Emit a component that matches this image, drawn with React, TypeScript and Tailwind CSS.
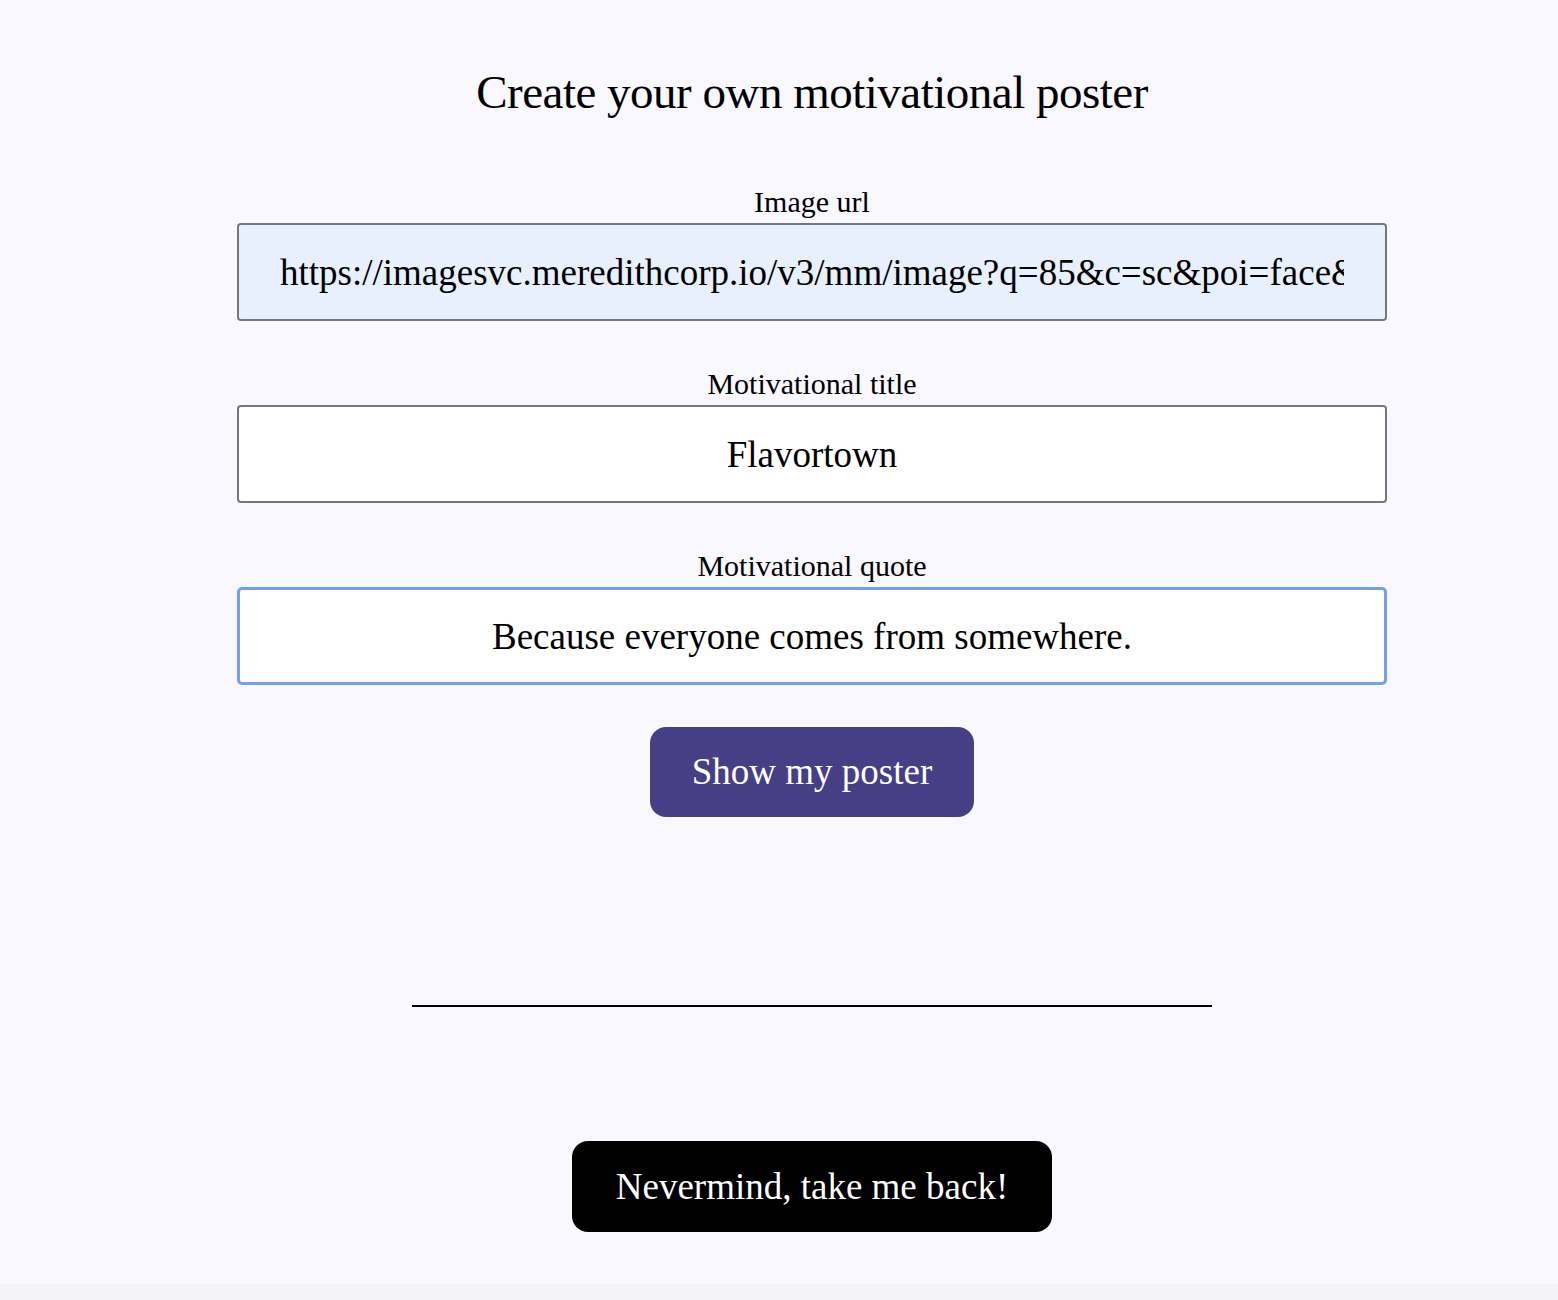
import React, { useEffect, useRef, useState } from "react";

const serif = "font-['Liberation_Serif','Times_New_Roman',serif]";

export default function App() {
  const [url, setUrl] = useState(
    "https://imagesvc.meredithcorp.io/v3/mm/image?q=85&c=sc&poi=face&w=2000&h=1047&url=guy-fieri.jpg"
  );
  const [title, setTitle] = useState("Flavortown");
  const [quote, setQuote] = useState("Because everyone comes from somewhere.");
  const quoteRef = useRef<HTMLInputElement>(null);

  useEffect(() => {
    const el = quoteRef.current;
    if (el) {
      el.focus();
      el.setSelectionRange(el.value.length, el.value.length);
    }
  }, []);

  return (
    <div className={`min-h-[1300px] bg-[#f3f3f7] text-black ${serif}`}>
      <main className="h-[1284px] bg-[#f8f8fe] pl-[66px] flex flex-col items-center">
        <h1 className="mt-[62px] h-[60px] leading-[60px] text-[47px] tracking-[-0.5px]">
          Create your own motivational poster
        </h1>

        <form
          className="mt-[62px] flex flex-col items-center"
          onSubmit={(e) => e.preventDefault()}
        >
          {/* Image url */}
          <label htmlFor="url" className="block h-[36px] leading-[36px] text-[30px]">
            Image url
          </label>
          <input
            id="url"
            value={url}
            onChange={(e) => setUrl(e.target.value)}
            className="mt-[3px] w-[1150px] h-[98px] px-[41px] text-center text-[37px] bg-[#e8f0fe] border-2 border-[#777] rounded-[4px] outline-none"
          />

          {/* Title */}
          <label htmlFor="title" className="mt-[45px] block h-[36px] leading-[36px] text-[30px]">
            Motivational title
          </label>
          <input
            id="title"
            value={title}
            onChange={(e) => setTitle(e.target.value)}
            className="mt-[3px] w-[1150px] h-[98px] px-[41px] text-center text-[37px] bg-white border-2 border-[#777] rounded-[4px] outline-none"
          />

          {/* Quote */}
          <label htmlFor="quote" className="mt-[45px] block h-[36px] leading-[36px] text-[30px]">
            Motivational quote
          </label>
          <input
            id="quote"
            ref={quoteRef}
            value={quote}
            onChange={(e) => setQuote(e.target.value)}
            className="mt-[3px] w-[1150px] h-[98px] px-[41px] text-center text-[37px] bg-white border-[3px] border-[#72a0ef] rounded-[5px] outline-none caret-black"
          />

          <button
            type="submit"
            className="mt-[42px] w-[324px] h-[90px] rounded-[16px] bg-[#463f85] text-white text-[37px]"
          >
            Show my poster
          </button>
        </form>

        <hr className="mt-[188px] w-[800px] border-0 border-t-2 border-black" />

        <button className="mt-[134px] w-[480px] h-[91px] rounded-[16px] bg-black text-white text-[37px]">
          Nevermind, take me back!
        </button>
      </main>
    </div>
  );
}
